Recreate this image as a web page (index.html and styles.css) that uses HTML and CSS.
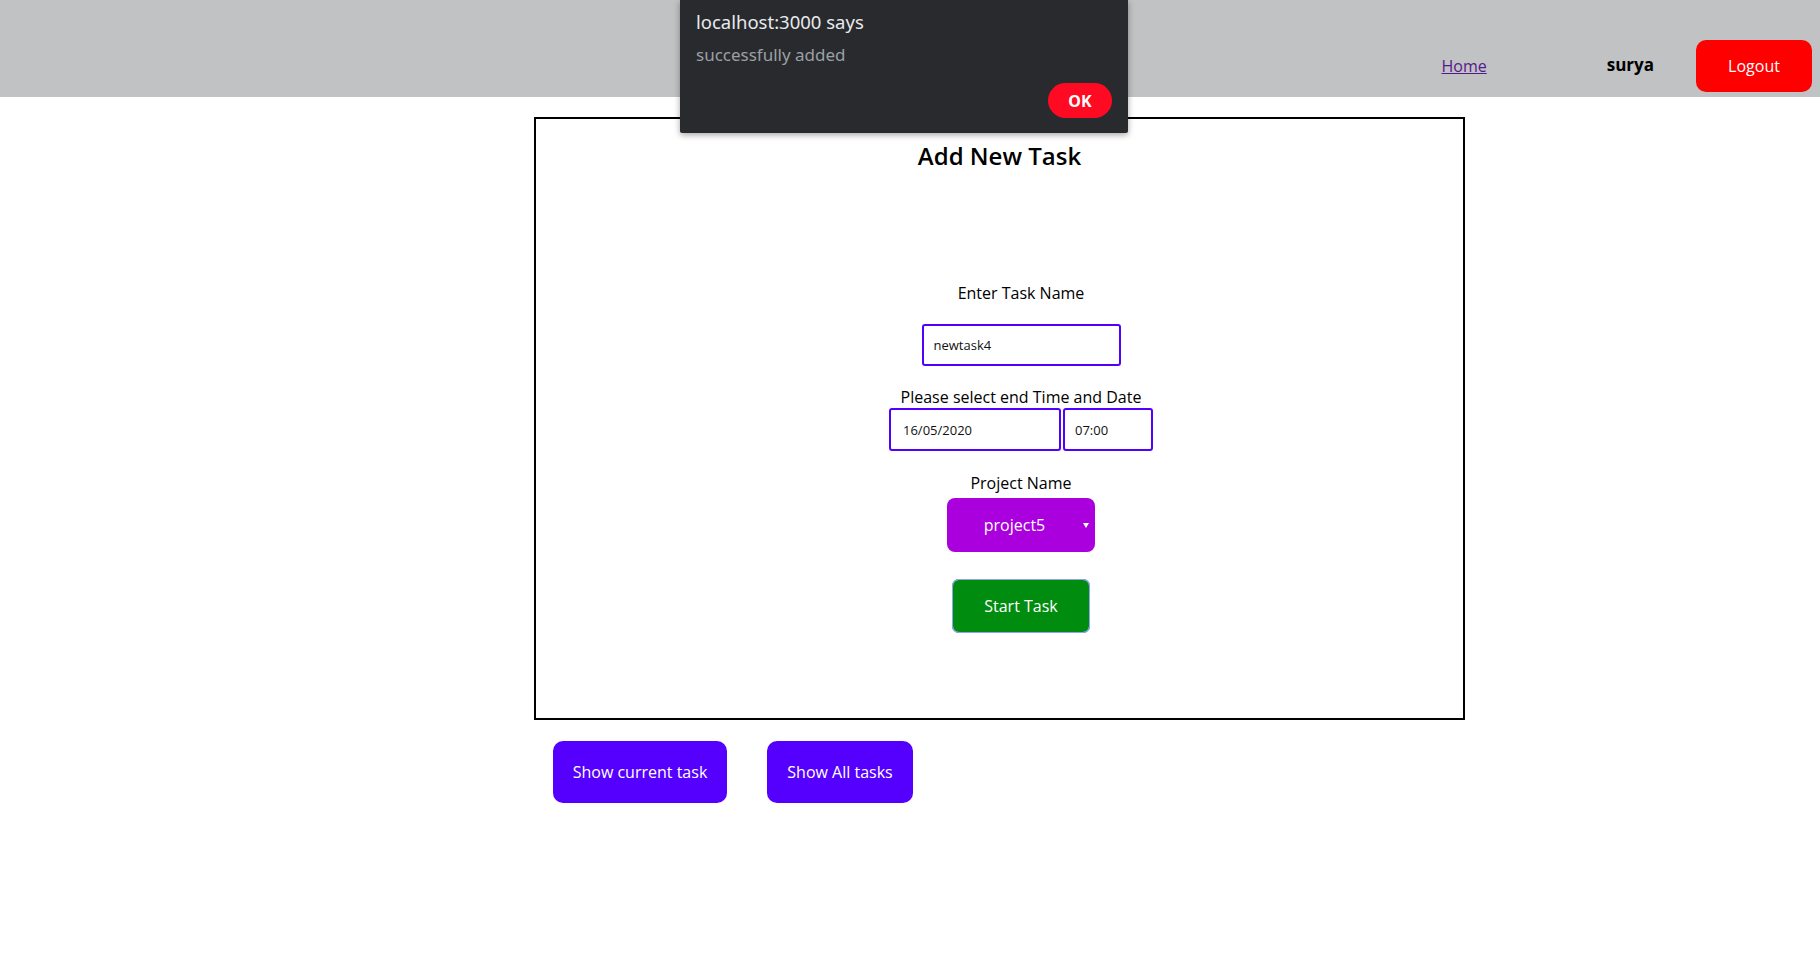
FILE: index.html
```html
<!DOCTYPE html>
<html>
<head>
<meta charset="utf-8">
<link rel="stylesheet" href="styles.css">
</head>
<body>
<header class="navbar">
  <a class="nav-link" href="#">Home</a>
  <span class="nav-user">surya</span>
  <button class="btn-logout">Logout</button>
</header>

<main class="page">
  <section class="card">
    <h2 class="card-title">Add New Task</h2>
    <form class="task-form">
      <label class="field-label label-task">Enter Task Name</label>
      <input class="field-input input-task" type="text" value="newtask4">
      <label class="field-label label-time">Please select end Time and Date</label>
      <div class="datetime-row">
        <input class="field-input input-date" type="text" value="16/05/2020">
        <input class="field-input input-time" type="text" value="07:00">
      </div>
      <label class="field-label label-project">Project Name</label>
      <div class="select-box">
        <span class="select-value">project5</span>
        <span class="select-arrow"></span>
      </div>
      <button class="btn-start" type="button">Start Task</button>
    </form>
  </section>
  <div class="actions">
    <button class="btn-action btn-current">Show current task</button>
    <button class="btn-action btn-all">Show All tasks</button>
  </div>
</main>

<div class="dialog">
  <div class="dialog-title">localhost:3000 says</div>
  <div class="dialog-msg">successfully added</div>
  <div class="dialog-footer">
    <button class="dialog-ok">OK</button>
  </div>
</div>
</body>
</html>
```

FILE: styles.css
```css
* { box-sizing: border-box; }

html, body {
  margin: 0;
  padding: 0;
  background: #ffffff;
  font-family: "Open Sans", "Liberation Sans", sans-serif;
  color: #000;
}

.navbar {
  height: 97px;
  background: #c1c2c4;
  display: flex;
  justify-content: flex-end;
  align-items: center;
  padding: 40px 8px 5px 0;
}

.nav-link {
  font-size: 16px;
  color: #551a8b;
  text-decoration: underline;
  margin-right: 120px;
  margin-top: -1px;
}

.nav-user {
  font-size: 17px;
  font-weight: 700;
  margin-right: 42px;
  margin-top: -3px;
}

.btn-logout {
  width: 116px;
  height: 52px;
  border: none;
  border-radius: 10px;
  background: #ff0000;
  color: #fff;
  font-family: "Open Sans", sans-serif;
  font-size: 16px;
  padding: 0;
}

.page {
  padding-left: 534px;
  padding-top: 20px;
}

.card {
  width: 931px;
  height: 603px;
  border: 2px solid #000;
  display: flex;
  flex-direction: column;
  align-items: center;
}

.card-title {
  margin: 20px 0 0 0;
  font-size: 24px;
  font-weight: 600;
  line-height: 33px;
}

.task-form {
  display: flex;
  flex-direction: column;
  align-items: center;
  margin-left: 43px;
}

.field-label {
  font-size: 16px;
  line-height: 22px;
  display: block;
}

.label-task { margin-top: 110px; }
.label-time { margin-top: 20px; }
.label-project { margin-top: 21px; }

.field-input {
  border: 2px solid #5000ff;
  border-radius: 3px;
  font-family: "Open Sans", sans-serif;
  font-size: 13px;
  color: #111;
  background: #fff;
  outline: none;
}

.input-task {
  width: 199px;
  height: 42px;
  margin-top: 20px;
  padding: 0 10px;
}

.datetime-row {
  display: flex;
  gap: 2px;
}

.input-date {
  width: 172px;
  height: 43px;
  padding: 0 12px;
}

.input-time {
  width: 90px;
  height: 43px;
  padding: 0 10px;
}

.select-box {
  position: relative;
  width: 148px;
  height: 54px;
  margin-top: 4px;
  background: #aa00dd;
  border-radius: 8px;
  color: #fff;
  display: flex;
  align-items: center;
  justify-content: center;
  padding-right: 13px;
}

.select-value { font-size: 16px; }

.select-arrow {
  position: absolute;
  right: 6px;
  top: 25px;
  width: 0;
  height: 0;
  border-left: 3px solid transparent;
  border-right: 3px solid transparent;
  border-top: 5px solid #fff;
}

.btn-start {
  margin-top: 27px;
  width: 138px;
  height: 54px;
  border: none;
  border-radius: 7px;
  background: #008c0e;
  color: #fff;
  font-family: "Open Sans", sans-serif;
  font-size: 16px;
  outline: 1px solid #8fa4f5;
  outline-offset: -1px;
  box-shadow: inset 0 0 0 1px #8fa4f5;
}

.actions {
  display: flex;
  gap: 40px;
  padding-left: 19px;
  margin-top: 21px;
}

.btn-action {
  height: 62px;
  border: none;
  border-radius: 10px;
  background: #5500ff;
  color: #fff;
  font-family: "Open Sans", sans-serif;
  font-size: 16px;
  padding: 0;
}

.btn-current { width: 174px; }
.btn-all { width: 146px; }

.dialog {
  position: absolute;
  top: 0;
  left: 680px;
  width: 448px;
  height: 133px;
  background: #292a2d;
  box-shadow: 0 2px 6px rgba(0, 0, 0, 0.35);
  border-radius: 0 0 2px 2px;
  padding: 8px 16px 15px 16px;
  font-family: "Noto Sans", "Open Sans", sans-serif;
  display: flex;
  flex-direction: column;
}

.dialog-title {
  color: #e8eaed;
  font-size: 18.5px;
  line-height: 27px;
}

.dialog-msg {
  color: #9aa0a6;
  font-size: 17px;
  line-height: 23px;
  margin-top: 8px;
}

.dialog-footer {
  margin-top: auto;
  display: flex;
  justify-content: flex-end;
}

.dialog-ok {
  width: 64px;
  height: 35px;
  border: none;
  border-radius: 18px;
  background: #ff0a23;
  color: #fff;
  font-family: "Noto Sans", sans-serif;
  font-weight: 700;
  font-size: 16px;
  padding: 0;
}
```
